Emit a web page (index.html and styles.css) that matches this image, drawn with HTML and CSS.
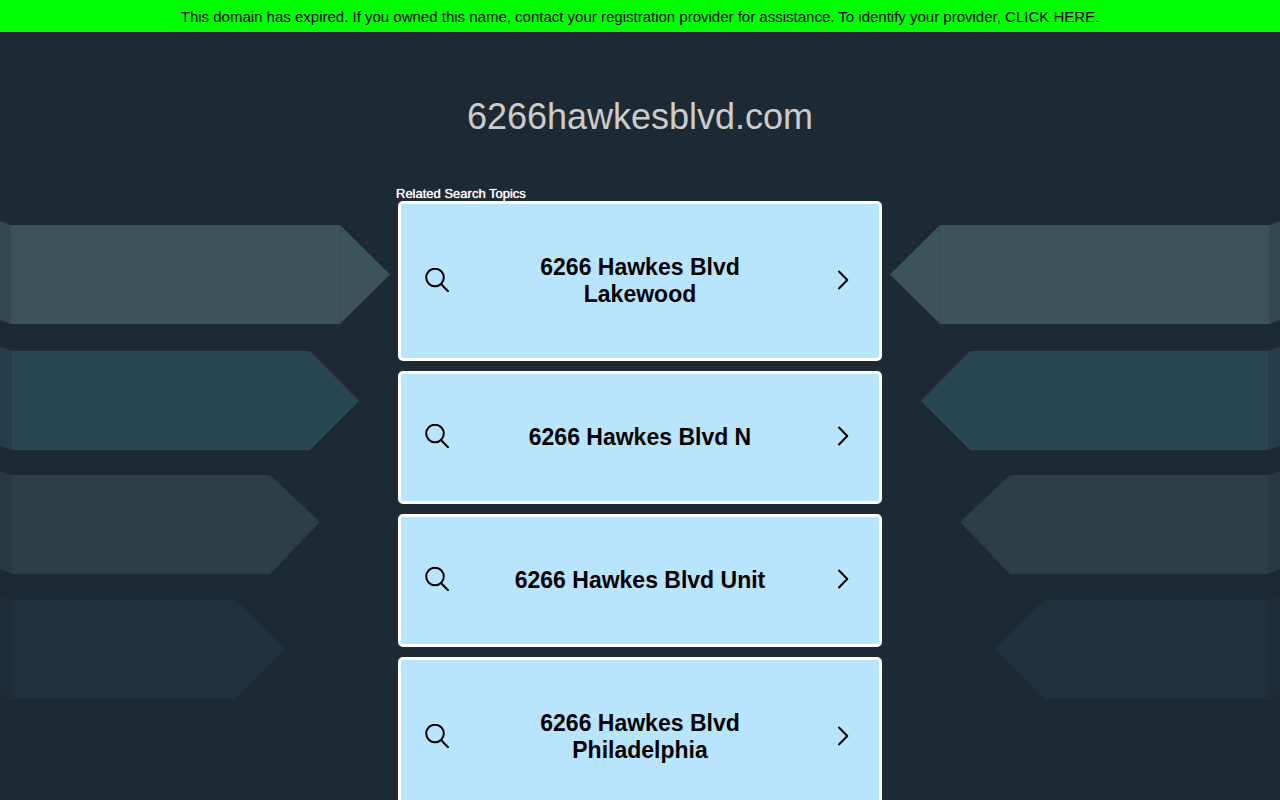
FILE: index.html
```html
<!DOCTYPE html>
<html lang="en">

<head>
    <meta charset="UTF-8">
    <meta name="viewport" content="width=device-width, initial-scale=1.0">
    <title>6266hawkesblvd.com</title>
    <link rel="stylesheet" href="styles.css">
</head>

<body>
    <div class="banner">
        This domain has expired. If you owned this name, contact your registration provider for assistance. To identify your provider, <a href="#">CLICK HERE.</a>
    </div>

    <div class="page">
        <!-- Background arrows, the right side is the left one mirrored -->
        <svg class="arrows arrows-left" viewBox="0 0 390 480" aria-hidden="true">
            <g id="arrows">
                <path fill="#33474e" d="M0 1L11 5V104L0 100z"/>
                <path fill="#3c5457" d="M11 5H340L390 54.500L340 104H11z"/>
                <path fill="#253d49" d="M0 127L12 131V230L0 226z"/>
                <path fill="#294654" d="M12 131H310L359 181L310 230H12z"/>
                <path fill="#28383f" d="M0 251L12 255V354L0 349z"/>
                <path fill="#2c3f44" d="M12 255H270L320 302L270 354H12z"/>
                <path fill="#1f2d38" d="M0 377L12 380V479L0 475z"/>
                <path fill="#20313d" d="M12 380H236L285 429L236 479H12z"/>
                <path fill="none" stroke="#000" stroke-opacity=".06" d="M340.500 5V104M309.500 131V230M235.500 380V479"/>
            </g>
        </svg>
        <svg class="arrows arrows-right" viewBox="0 0 390 480" aria-hidden="true">
            <use href="#arrows"/>
        </svg>

        <h1 class="domain">6266hawkesblvd.com</h1>

        <div class="topics">
            <h2 class="topics-title">Related Search Topics</h2>
            <a class="card" href="#">
                <svg class="icon" viewBox="0 0 24 24"><circle cx="10" cy="9.500" r="8.800"/><path d="M16 16L23 23.200"/></svg>
                <span class="card-text">6266 Hawkes Blvd Lakewood</span>
                <svg class="icon" viewBox="0 0 24 24"><path d="M8 3.500L16.300 12L8 20.500"/></svg>
            </a>
            <a class="card" href="#">
                <svg class="icon" viewBox="0 0 24 24"><circle cx="10" cy="9.500" r="8.800"/><path d="M16 16L23 23.200"/></svg>
                <span class="card-text">6266 Hawkes Blvd N</span>
                <svg class="icon" viewBox="0 0 24 24"><path d="M8 3.500L16.300 12L8 20.500"/></svg>
            </a>
            <a class="card" href="#">
                <svg class="icon" viewBox="0 0 24 24"><circle cx="10" cy="9.500" r="8.800"/><path d="M16 16L23 23.200"/></svg>
                <span class="card-text">6266 Hawkes Blvd Unit</span>
                <svg class="icon" viewBox="0 0 24 24"><path d="M8 3.500L16.300 12L8 20.500"/></svg>
            </a>
            <a class="card" href="#">
                <svg class="icon" viewBox="0 0 24 24"><circle cx="10" cy="9.500" r="8.800"/><path d="M16 16L23 23.200"/></svg>
                <span class="card-text">6266 Hawkes Blvd Philadelphia</span>
                <svg class="icon" viewBox="0 0 24 24"><path d="M8 3.500L16.300 12L8 20.500"/></svg>
            </a>
        </div>
    </div>
</body>

</html>
```
FILE: styles.css
```css
body {
    margin: 0;
    background-color: #1e2a33;
    font-family: "Liberation Sans", Arial, sans-serif;
}

a {
    color: inherit;
    text-decoration: none;
}

/* Expired notice */
.banner {
    padding: 9px 8px 7px;
    background-color: #00ff00;
    color: #000;
    font-size: 15px;
    line-height: 16px;
    text-align: center;
}

.page {
    position: relative;
    overflow: hidden;
}

/* Decorative arrows behind the content */
.arrows {
    position: absolute;
    top: 188px;
    width: 390px;
    height: 480px;
    z-index: -1;
}

.arrows-left {
    left: 0;
}

.arrows-right {
    right: 0;
    transform: scaleX(-1);
}

.domain {
    margin: 64px 0 48px;
    color: #ccc;
    font-size: 36px;
    font-weight: normal;
    line-height: 42px;
    text-align: center;
}

/* Search topics */
.topics {
    max-width: 488px;
    margin: 0 auto;
}

.topics-title {
    margin: 0;
    color: #fff;
    font-size: 13px;
    font-weight: normal;
    line-height: 15px;
    text-shadow: 0 0 1px #fff;
}

.card {
    display: flex;
    align-items: center;
    margin: 0 2px 10px;
    padding: 50px 24px;
    border: 3px solid #fff;
    border-radius: 5px;
    background-color: #b8e5fc;
    color: #000;
}

.card-text {
    flex: 1;
    padding: 0 40px;
    font-size: 23px;
    font-weight: bold;
    line-height: 27px;
    text-align: center;
}

.icon {
    flex: none;
    width: 24px;
    height: 24px;
    padding-bottom: 3px;
    fill: none;
    stroke: #000;
    stroke-width: 2;
    stroke-linecap: round;
    stroke-linejoin: round;
}
```
